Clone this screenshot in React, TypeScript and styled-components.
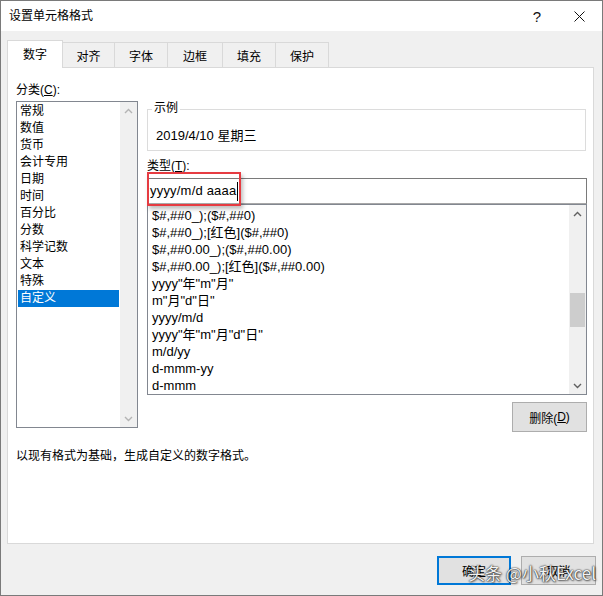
import React from 'react';
import styled, { createGlobalStyle } from 'styled-components';

const GlobalStyle = createGlobalStyle`
  body {
    margin: 0;
    background: #ffffff;
  }
`;

const UI_FONT = `"Liberation Sans", "Noto Sans CJK SC", sans-serif`;

// Styled-components

const Dialog = styled.div`
  position: relative;
  box-sizing: border-box;
  width: 603px;
  height: 596px;
  border: 1px solid #7a7a7a;
  background-color: #f0f0f0;
  font-family: ${UI_FONT};
  font-size: 12px;
  color: #000;
  display: flex;
  flex-direction: column;
  overflow: hidden;
`;

const TitleBar = styled.div`
  height: 30px;
  flex: 0 0 30px;
  background-color: #fff;
  display: flex;
  align-items: center;
  padding-left: 8px;
  line-height: 17px;
`;

const Title = styled.span`
  flex: 1;
`;

const TitleButton = styled.div<{ $w: number; $mr?: number }>`
  width: ${(p) => p.$w}px;
  height: 30px;
  margin-right: ${(p) => p.$mr || 0}px;
  display: flex;
  align-items: center;
  justify-content: center;
  font-size: 15px;
  color: #111;
`;

const Body = styled.div`
  padding: 9px 8px 0 6px;
  display: flex;
  flex-direction: column;
`;

const TabStrip = styled.div`
  display: flex;
  align-items: flex-end;
  height: 27px;
`;

const Tab = styled.div<{ $w: number; $active?: boolean }>`
  position: relative;
  box-sizing: border-box;
  width: ${(p) => p.$w}px;
  height: ${(p) => (p.$active ? 28 : 25)}px;
  margin-left: -1px;
  margin-bottom: ${(p) => (p.$active ? -1 : 0)}px;
  z-index: ${(p) => (p.$active ? 2 : 1)};
  padding-top: 6px;
  line-height: 17px;
  text-align: center;
  border: 1px solid #d9d9d9;
  border-bottom: none;
  background-color: ${(p) => (p.$active ? '#fff' : '#f0f0f0')};

  &:first-child {
    margin-left: 0;
  }
`;

const Panel = styled.div`
  box-sizing: border-box;
  height: 477px;
  border: 1px solid #d9d9d9;
  background-color: #fff;
  padding: 14px 6px 0 8px;
`;

const Columns = styled.div`
  display: grid;
  grid-template-columns: 122px 440px;
  column-gap: 9px;
  align-items: start;
`;

const Column = styled.div`
  display: flex;
  flex-direction: column;
`;

const Label = styled.div<{ $mt?: number }>`
  line-height: 17px;
  margin-top: ${(p) => p.$mt || 0}px;

  u {
    text-decoration: underline;
    text-underline-offset: 1px;
  }
`;

const ListBox = styled.div<{ $h: number; $mt?: number }>`
  box-sizing: border-box;
  height: ${(p) => p.$h}px;
  margin-top: ${(p) => p.$mt || 0}px;
  border: 1px solid #828790;
  background-color: #fff;
  display: flex;
  overflow: hidden;
`;

const Items = styled.div<{ $pad: string }>`
  flex: 1;
  padding: ${(p) => p.$pad};
  overflow: hidden;
`;

const Item = styled.div<{ $selected?: boolean; $size?: number; $indent?: number }>`
  height: 17px;
  line-height: 17px;
  white-space: nowrap;
  font-size: ${(p) => p.$size || 12}px;
  padding-left: ${(p) => p.$indent ?? 2}px;
  background-color: ${(p) => (p.$selected ? '#0078d7' : 'transparent')};
  color: ${(p) => (p.$selected ? '#fff' : '#000')};
`;

const ScrollBar = styled.div`
  width: 17px;
  flex: 0 0 17px;
  background-color: #f0f0f0;
  display: flex;
  flex-direction: column;
`;

const ScrollArrow = styled.div`
  height: 17px;
  flex: 0 0 17px;
  display: flex;
  align-items: center;
  justify-content: center;
`;

const ScrollTrack = styled.div`
  flex: 1;
  display: flex;
  flex-direction: column;
  align-items: center;
`;

const Thumb = styled.div<{ $h: number }>`
  width: 15px;
  height: ${(p) => p.$h}px;
  background-color: #cdcdcd;
`;

const Group = styled.div`
  position: relative;
  box-sizing: border-box;
  height: 42px;
  margin: 27px 1px 0 0;
  border: 1px solid #dcdcdc;
  padding: 17px 0 0 8px;
`;

const Legend = styled.span`
  position: absolute;
  top: -10px;
  left: 4px;
  padding: 0 2px;
  background-color: #fff;
  line-height: 17px;
`;

const Sample = styled.div`
  font-size: 13px;
  line-height: 17px;
`;

const InputWrap = styled.div`
  position: relative;
  margin-top: 3px;
`;

const TextInput = styled.div`
  box-sizing: border-box;
  height: 26px;
  border: 1px solid #7a7a7a;
  border-bottom-color: #a8a8a8;
  padding-left: 2px;
  line-height: 24px;
  font-size: 13px;
  letter-spacing: 0.2px;
  display: flex;
  align-items: center;
`;

const Caret = styled.span`
  display: inline-block;
  width: 1px;
  height: 19px;
  margin-left: 1px;
  background-color: #000;
`;

const Highlight = styled.div`
  position: absolute;
  left: 0;
  top: -6px;
  width: 94px;
  height: 34px;
  box-sizing: border-box;
  border: 2px solid #e63b41;
  box-shadow: 2px 3px 4px rgba(0, 0, 0, 0.25);
  pointer-events: none;
`;

const ButtonRow = styled.div<{ $mt: number }>`
  display: flex;
  justify-content: flex-end;
  margin-top: ${(p) => p.$mt}px;
`;

const Button = styled.div<{ $w: number; $h: number; $primary?: boolean }>`
  box-sizing: border-box;
  width: ${(p) => p.$w}px;
  height: ${(p) => p.$h}px;
  background-color: #e1e1e1;
  border: ${(p) => (p.$primary ? '2px solid #0078d7' : '1px solid #adadad')};
  display: flex;
  align-items: center;
  justify-content: center;
  font-size: 12px;

  u {
    text-decoration: underline;
    text-underline-offset: 1px;
  }
`;

const Description = styled.div`
  margin-top: 16px;
  line-height: 17px;
`;

const Footer = styled.div`
  display: flex;
  justify-content: flex-end;
  gap: 10px;
  padding: 12px 6px 0 0;
`;

const Watermark = styled.div`
  position: absolute;
  left: 467px;
  top: 561px;
  font-family: "Noto Sans CJK SC", "Liberation Sans", sans-serif;
  font-size: 17px;
  line-height: 22px;
  color: rgba(255, 255, 255, 0.95);
  text-shadow: 0 0 1px #222, 0 0 2px rgba(0, 0, 0, 0.7), 1px 1px 2px rgba(0, 0, 0, 0.5);
  white-space: nowrap;
  pointer-events: none;
`;

// Icons

const Chevron: React.FC<{ up?: boolean; color: string }> = ({ up, color }) => (
  <svg width="9" height="6" viewBox="0 0 9 6">
    <path
      d={up ? 'M1 5 L4.5 1.5 L8 5' : 'M1 1 L4.5 4.5 L8 1'}
      fill="none"
      stroke={color}
      strokeWidth="1.4"
    />
  </svg>
);

const CloseIcon: React.FC = () => (
  <svg width="11" height="11" viewBox="0 0 11 11">
    <path d="M0.5 0.5 L10.5 10.5 M10.5 0.5 L0.5 10.5" stroke="#111" strokeWidth="1" />
  </svg>
);

// Data

const tabs = [
  { label: '数字', w: 56 },
  { label: '对齐', w: 53 },
  { label: '字体', w: 54 },
  { label: '边框', w: 56 },
  { label: '填充', w: 54 },
  { label: '保护', w: 54 },
];

const categories = [
  '常规',
  '数值',
  '货币',
  '会计专用',
  '日期',
  '时间',
  '百分比',
  '分数',
  '科学记数',
  '文本',
  '特殊',
  '自定义',
];

const formats = [
  '$#,##0_);($#,##0)',
  '$#,##0_);[红色]($#,##0)',
  '$#,##0.00_);($#,##0.00)',
  '$#,##0.00_);[红色]($#,##0.00)',
  'yyyy"年"m"月"',
  'm"月"d"日"',
  'yyyy/m/d',
  'yyyy"年"m"月"d"日"',
  'm/d/yy',
  'd-mmm-yy',
  'd-mmm',
];

// JSX-Component

const App: React.FC = () => {
  const thumbOffset = 71;

  return (
    <>
      <GlobalStyle />
      <Dialog>
        <TitleBar>
          <Title>设置单元格格式</Title>
          <TitleButton $w={30} $mr={4}>
            ?
          </TitleButton>
          <TitleButton $w={46}>
            <CloseIcon />
          </TitleButton>
        </TitleBar>

        <Body>
          <TabStrip>
            {tabs.map((t, i) => (
              <Tab key={t.label} $w={t.w} $active={i === 0}>
                {t.label}
              </Tab>
            ))}
          </TabStrip>

          <Panel>
            <Columns>
              <Column>
                <Label>
                  分类(<u>C</u>):
                </Label>
                <ListBox $h={327} $mt={2}>
                  <Items $pad="1px">
                    {categories.map((c) => (
                      <Item key={c} $selected={c === '自定义'}>
                        {c}
                      </Item>
                    ))}
                  </Items>
                  <ScrollBar>
                    <ScrollArrow>
                      <Chevron up color="#b4b4b4" />
                    </ScrollArrow>
                    <ScrollTrack />
                    <ScrollArrow>
                      <Chevron color="#b4b4b4" />
                    </ScrollArrow>
                  </ScrollBar>
                </ListBox>
              </Column>

              <Column>
                <Group>
                  <Legend>示例</Legend>
                  <Sample>2019/4/10 星期三</Sample>
                </Group>
                <Label $mt={7}>
                  类型(<u>T</u>):
                </Label>
                <InputWrap>
                  <TextInput>
                    yyyy/m/d aaaa
                    <Caret />
                  </TextInput>
                  <Highlight />
                </InputWrap>
                <ListBox $h={191}>
                  <Items $pad="2px 0 0 1px">
                    {formats.map((f) => (
                      <Item key={f} $size={13} $indent={3}>
                        {f}
                      </Item>
                    ))}
                  </Items>
                  <ScrollBar>
                    <ScrollArrow>
                      <Chevron up color="#606060" />
                    </ScrollArrow>
                    <ScrollTrack>
                      <Thumb $h={34} style={{ marginTop: thumbOffset }} />
                    </ScrollTrack>
                    <ScrollArrow>
                      <Chevron color="#606060" />
                    </ScrollArrow>
                  </ScrollBar>
                </ListBox>
                <ButtonRow $mt={7}>
                  <Button $w={75} $h={30}>
                    删除(<u>D</u>)
                  </Button>
                </ButtonRow>
              </Column>
            </Columns>

            <Description>以现有格式为基础，生成自定义的数字格式。</Description>
          </Panel>
        </Body>

        <Footer>
          <Button $w={74} $h={29} $primary>
            确定
          </Button>
          <Button $w={75} $h={29}>
            取消
          </Button>
        </Footer>

        <Watermark>头条 @小秋Excel</Watermark>
      </Dialog>
    </>
  );
};

export default App;
